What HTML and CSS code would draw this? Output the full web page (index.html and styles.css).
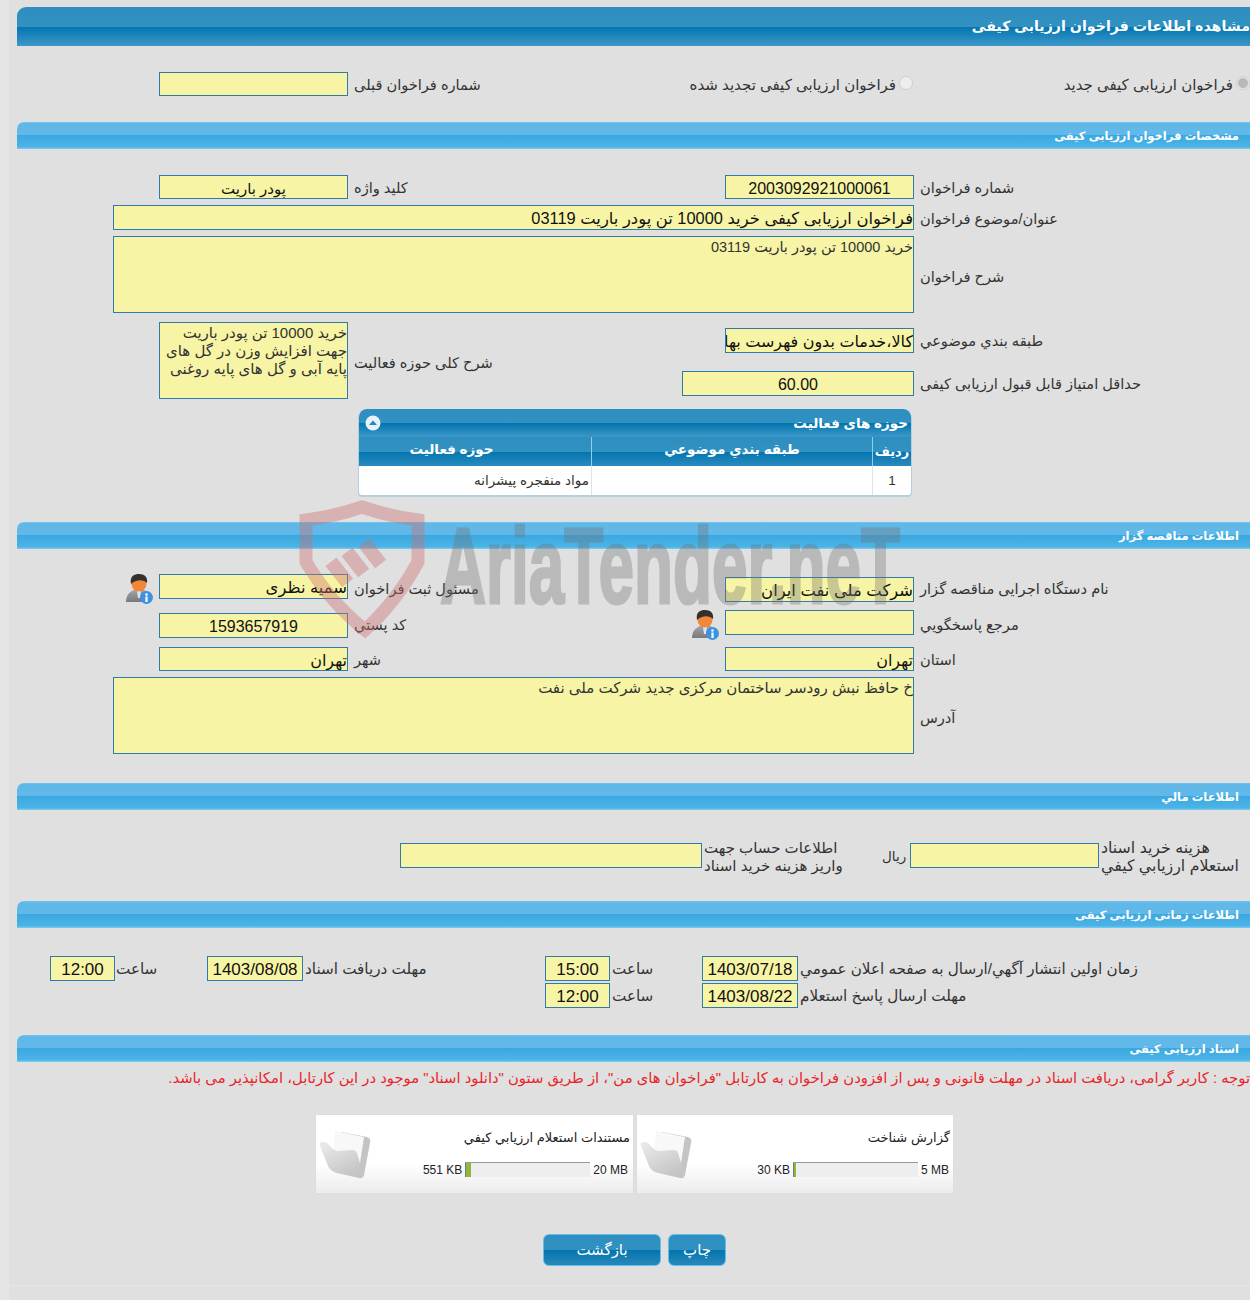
FILE: index.html
```html
<!DOCTYPE html>
<html lang="fa">
<head>
    <meta charset="UTF-8">
    <title>مشاهده اطلاعات فراخوان ارزیابی کیفی</title>
    <link rel="stylesheet" href="styles.css">
</head>
<body>
<div class="page">

    <div class="main-bar">مشاهده اطلاعات فراخوان ارزیابی کیفی</div>

    <!-- type of call -->
    <div class="row row-top">
        <div class="cell"><div class="field w189"></div></div>
        <div class="label">شماره فراخوان قبلی</div>
        <div class="cell radio-cell"><span class="radio-text">فراخوان ارزیابی کیفی تجدید شده</span><span class="radio"></span></div>
        <div class="cell radio-cell first"><span class="radio-text">فراخوان ارزیابی کیفی جدید</span><span class="radio on"></span></div>
    </div>

    <div class="bar mt26">مشخصات فراخوان ارزیابی کیفی</div>

    <div class="row mt26">
        <div class="cell"><div class="field w189 center small">پودر باریت</div></div>
        <div class="label">کلید واژه</div>
        <div class="cell"><div class="field w189 center">2003092921000061</div></div>
        <div class="label">شماره فراخوان</div>
    </div>
    <div class="row rh25 mt6">
        <div class="cell wide"><div class="field h25 wide-field name">فراخوان ارزیابی کیفی خرید 10000 تن پودر باریت 03119</div></div>
        <div class="label">عنوان/موضوع فراخوان</div>
    </div>
    <div class="row rh77 mt6">
        <div class="cell wide"><div class="area wide-field">خرید 10000 تن پودر باریت 03119</div></div>
        <div class="label">شرح فراخوان</div>
    </div>

    <div class="row split mt9">
        <div class="cell span-rows"><div class="area w189 big">خرید 10000 تن پودر باریت<br>جهت افزایش وزن در گل های<br>پایه آبی و گل های پایه روغنی</div></div>
        <div class="label span-rows">شرح کلی حوزه فعالیت</div>
        <div class="cell at-cat"><div class="field h25 w189">کالا،خدمات بدون فهرست بها</div></div>
        <div class="label at-cat">طبقه بندي موضوعي</div>
        <div class="cell at-score"><div class="field h25 w232 center">60.00</div></div>
        <div class="label at-score">حداقل امتیاز قابل قبول ارزیابی کیفی</div>
    </div>

    <!-- activity table -->
    <div class="activity">
        <div class="activity-title">
            <svg class="collapse" viewBox="0 0 16 16"><circle cx="8" cy="8" r="7.5" fill="#e6f1f8"/><path d="M4 10 L8 5.5 L12 10 Z" fill="#2a86b8"/></svg>
            <span>حوزه های فعالیت</span>
        </div>
        <div class="activity-head">
            <div class="head-name">حوزه فعالیت</div>
            <div>طبقه بندي موضوعي</div>
            <div class="head-num">رديف</div>
        </div>
        <div class="activity-row">
            <div class="activity-name">مواد منفجره پیشرانه</div>
            <div></div>
            <div class="activity-num">1</div>
        </div>
    </div>

    <div class="bar mt27">اطلاعات مناقصه گزار</div>

    <div class="row rh28 mt25">
        <div class="cell">
            <svg class="user" viewBox="0 0 28 30"><use href="#user-icon"/></svg>
            <div class="field h25 w189 name">سمیه نظری</div>
        </div>
        <div class="label">مسئول ثبت فراخوان</div>
        <div class="cell low"><div class="field h25 w189 name">شرکت ملی نفت ایران</div></div>
        <div class="label">نام دستگاه اجرایی مناقصه گزار</div>
    </div>
    <div class="row rh28 mt8">
        <div class="cell low"><div class="field h25 w189 center">1593657919</div></div>
        <div class="label">کد پستي</div>
        <div class="cell">
            <svg class="user" viewBox="0 0 28 30"><use href="#user-icon"/></svg>
            <div class="field h25 w189"></div>
        </div>
        <div class="label">مرجع پاسخگويي</div>
    </div>
    <div class="row mt9">
        <div class="cell"><div class="field w189">تهران</div></div>
        <div class="label">شهر</div>
        <div class="cell"><div class="field w189">تهران</div></div>
        <div class="label">استان</div>
    </div>
    <div class="row rh77 mt6">
        <div class="cell wide"><div class="area wide-field big">خ حافظ نبش رودسر ساختمان مرکزی جدید شرکت ملی نفت</div></div>
        <div class="label">آدرس</div>
    </div>

    <div class="bar mt29">اطلاعات مالي</div>

    <div class="money">
        <div class="field h25 w302"></div>
        <div class="money-label account">اطلاعات حساب جهت<br>واریز هزینه خرید اسناد</div>
        <div class="rial">ریال</div>
        <div class="field h25 w189"></div>
        <div class="money-label cost">هزینه خرید اسناد<br>استعلام ارزيابي کيفي</div>
    </div>

    <div class="bar mt33">اطلاعات زمانی ارزیابی کیفی</div>

    <div class="times mt28">
        <div class="field h25 w64 center">12:00</div>
        <div class="label">ساعت</div>
        <div class="field h25 w96 center">1403/08/08</div>
        <div class="label">مهلت دریافت اسناد</div>
        <div class="field h25 w64 center">15:00</div>
        <div class="label">ساعت</div>
        <div class="field h25 w96 center">1403/07/18</div>
        <div class="label">زمان اولین انتشار آگهي/ارسال به صفحه اعلان عمومي</div>
    </div>
    <div class="times second mt2">
        <div class="field h25 w64 center">12:00</div>
        <div class="label">ساعت</div>
        <div class="field h25 w96 center">1403/08/22</div>
        <div class="label">مهلت ارسال پاسخ استعلام</div>
    </div>

    <div class="bar mt27">اسناد ارزیابی کیفی</div>

    <div class="notice">توجه : کاربر گرامی، دریافت اسناد در مهلت قانونی و پس از افزودن فراخوان به کارتابل "فراخوان های من"، از طریق ستون "دانلود اسناد" موجود در این کارتابل، امکانپذیر می باشد.</div>

    <div class="files">
        <div class="file">
            <svg class="folder" viewBox="0 0 54 50"><use href="#folder-icon"/></svg>
            <div class="file-info">
                <div class="file-title">مستندات استعلام ارزيابي کيفي</div>
                <div class="file-usage">
                    <span>551 KB</span>
                    <div class="meter"><div class="meter-fill" style="width:5px"></div></div>
                    <span>20 MB</span>
                </div>
            </div>
        </div>
        <div class="file">
            <svg class="folder" viewBox="0 0 54 50"><use href="#folder-icon"/></svg>
            <div class="file-info">
                <div class="file-title">گزارش شناخت</div>
                <div class="file-usage">
                    <span>30 KB</span>
                    <div class="meter"><div class="meter-fill" style="width:2px"></div></div>
                    <span>5 MB</span>
                </div>
            </div>
        </div>
    </div>

    <div class="buttons">
        <button class="btn btn-back">بازگشت</button>
        <button class="btn btn-print">چاپ</button>
    </div>

    <!-- watermark lies over the page -->
    <svg class="watermark" viewBox="0 0 620 150" width="620" height="150">
        <path class="wm-shield" d="M10 20 Q40 16 66 7 Q92 16 122 20 L122 62 Q100 102 69 130 Q34 102 10 62 Z"/>
        <g class="wm-hammer">
            <rect x="69" y="40" width="14" height="27" transform="rotate(-38 76 53)"/>
            <rect x="52" y="49" width="14" height="27" transform="rotate(-38 59 62)"/>
            <rect x="36" y="59" width="14" height="27" transform="rotate(-38 43 72)"/>
        </g>
        <text class="wm-text" x="144" y="103" textLength="460" lengthAdjust="spacingAndGlyphs">AriaTender.neT</text>
    </svg>

    <!-- shared icons -->
    <svg class="defs" width="0" height="0">
        <defs>
            <linearGradient id="folder-front" x1="0" y1="0" x2="0.6" y2="1">
                <stop offset="0" stop-color="#ececec"/>
                <stop offset="1" stop-color="#c4c4c4"/>
            </linearGradient>
            <linearGradient id="user-body" x1="0" y1="0" x2="0" y2="1">
                <stop offset="0" stop-color="#a2a5a8"/>
                <stop offset="1" stop-color="#77797c"/>
            </linearGradient>
            <g id="user-icon">
                <path d="M1 28 C1 22 4 18 9 16 L19 16 C24 18 26 22 26 28 Z" fill="url(#user-body)"/>
                <path d="M12 17 L16 17 L15 24 L13 24 Z" fill="#dfe4e8"/>
                <ellipse cx="14" cy="9.5" rx="7.5" ry="8" fill="#f2873a"/>
                <path d="M6 10 C4.5 2 9.5 0 14 0 C19.5 0 23 3 22 9 C18 5 11 5.5 6 10 Z" fill="#33302e"/>
                <circle cx="21.5" cy="23.5" r="6.5" fill="#3d92e0"/>
                <circle cx="21.5" cy="20.5" r="1.3" fill="#fff"/>
                <rect x="20.4" y="22.5" width="2.2" height="5.5" fill="#fff"/>
            </g>
            <g id="folder-icon">
                <path d="M22 3 L48 8 C51 9 52 11 51 14 L45 46 C44 49 42 49 40 48 L30 36 Z" fill="#c4c4c4"/>
                <path d="M16 2 L45 8 L41 34 L14 26 Z" fill="#f8f8f8"/>
                <path d="M3 13 C1 13 0 15 1 17 L9 37 C11 41 14 43 18 44 L40 49 C44 50 45 47 44 44 L38 24 C37 22 36 21 33 21 L19 22 C16 22 14 20 12 18 L8 14 C7 13 5 13 3 13 Z" fill="url(#folder-front)"/>
            </g>
        </defs>
    </svg>

</div>
</body>
</html>
```

FILE: styles.css
```css
html, body {
    margin: 0;
    padding: 0;
    background: #fff;
}
body {
    width: 1250px;
    height: 1308px;
    overflow: hidden;
    font-family: "Liberation Sans", "DejaVu Sans", sans-serif;
    font-size: 14.6px;
    color: #333;
}
.page {
    position: relative;
    height: 1293px;
    padding-top: 7px;
    background: #e0e0e0;
    box-shadow: inset 9px 0 0 #e5e5e5;
    overflow: hidden;
}
.page::after {
    content: "";
    position: absolute;
    left: 9px;
    right: 0;
    top: 1285px;
    height: 1px;
    background: #e6e6e6;
}
.mt2 { margin-top: 2px; }
.mt6 { margin-top: 6px; }
.mt8 { margin-top: 8px; }
.mt9 { margin-top: 9px; }
.mt25 { margin-top: 25px; }
.mt26 { margin-top: 26px; }
.mt27 { margin-top: 27px; }
.mt28 { margin-top: 28px; }
.mt29 { margin-top: 29px; }
.mt33 { margin-top: 33px; }

/* title bars */
.main-bar {
    margin-left: 17px;
    height: 39px;
    line-height: 38px;
    border-top-left-radius: 9px;
    background: linear-gradient(#2e8ebf 0, #3191c1 50%, #0275b0 51%, #3d98c8 100%);
    color: #fff;
    font-size: 14.2px;
    font-weight: bold;
    direction: rtl;
    white-space: nowrap;
}
.bar {
    margin-left: 17px;
    height: 27px;
    line-height: 28px;
    padding-right: 11px;
    border-top-left-radius: 7px;
    background: linear-gradient(#74c6ef 0, #60b8e8 6%, #62b9e9 48%, #3aa9e1 50%, #4db3e6 92%, #7acff3 100%);
    color: #fff;
    font-size: 11.5px;
    font-weight: bold;
    direction: rtl;
}

/* form rows: four columns, field then its label */
.row {
    display: grid;
    grid-template-columns: 354px 371px 195px 330px;
    grid-template-rows: 24px;
    align-items: start;
}
.rh25 { grid-template-rows: 25px; }
.rh28 { grid-template-rows: 28px; }
.rh77 { grid-template-rows: 77px; }
.row-top {
    grid-template-columns: 354px 334px 226px 336px;
    margin-top: 26px;
}
.cell {
    display: flex;
    justify-content: flex-end;
    gap: 6px;
    padding-right: 6px;
}
.cell.wide {
    grid-column: 1 / 4;
}
.label {
    direction: rtl;
    text-align: left;
    white-space: nowrap;
    line-height: 18px;
    align-self: center;
    padding-top: 2px;
}
.row-top .radio-text {
    font-size: 15px;
    line-height: 26px;
    white-space: nowrap;
    direction: rtl;
}
.rh77 > .label, .split > .span-rows.label {
    padding-top: 5px;
}
.radio-cell {
    align-items: flex-start;
    gap: 3px;
    padding-right: 1px;
}
.radio-cell.first {
    padding-right: 0;
}
.radio {
    flex: none;
    box-sizing: border-box;
    width: 14px;
    height: 14px;
    margin-top: 4px;
    border: 1px solid #cfcfcf;
    border-radius: 50%;
    background: #ededed;
}
.radio.on {
    background: radial-gradient(circle, #b9b9b9 0 4.5px, #e8e8e8 5.5px);
}

.field, .area {
    box-sizing: border-box;
    background: #f7f5a5;
    border: 1px solid #2f7cab;
    direction: rtl;
    color: #111;
    font-size: 16px;
    white-space: nowrap;
    overflow: hidden;
    flex: none;
}
.field {
    height: 24px;
    line-height: 25px;
}
.area {
    height: 77px;
    padding-top: 1px;
    font-size: 14.5px;
    line-height: 18px;
    color: #333;
}
.area.big { font-size: 15px; }
.field.small { font-size: 15px; }
.field.name { font-size: 16.4px; }
.h25 { height: 25px; }
.w64 { width: 65px; }
.w96 { width: 96px; }
.w189 { width: 189px; }
.w232 { width: 232px; }
.w302 { width: 302px; }
.wide-field { width: 801px; }
.center { text-align: center; }
.low { padding-top: 3px; }

.split {
    grid-template-rows: 49px 28px;
}
.split .span-rows { grid-row: 1 / 3; }
.split .span-rows.cell { grid-column: 1; }
.split .span-rows.label { grid-column: 2; }
.at-cat { grid-row: 1; grid-column: 3; padding-top: 6px; }
.label.at-cat { grid-column: 4; align-self: start; padding-top: 10px; }
.at-score { grid-row: 2; grid-column: 2 / 4; }
.label.at-score { grid-column: 4; align-self: start; padding-top: 4px; }

.user {
    width: 28px;
    height: 30px;
    flex: none;
}

/* activity table */
.activity {
    width: 552px;
    margin: 10px 0 0 359px;
    height: 86px;
    border-radius: 8px 8px 3px 3px;
    box-shadow: 0 1px 0 1px #b7cfdd;
    overflow: hidden;
    background: #fff;
}
.activity-title {
    display: flex;
    justify-content: space-between;
    align-items: center;
    height: 28px;
    padding: 0 3px 0 6px;
    background: linear-gradient(#2e8ebf 0, #3191c1 50%, #0275b0 51%, #3d98c8 100%);
    color: #fff;
    font-size: 13.5px;
    font-weight: bold;
}
.activity-title span { direction: rtl; }
.collapse {
    width: 16px;
    height: 16px;
}
.activity-head, .activity-row {
    display: grid;
    grid-template-columns: 233px 281px 38px;
}
.activity-head {
    height: 29px;
    background: linear-gradient(#2e8ebf 0, #3191c1 50%, #0275b0 51%, #2a8abd 100%);
    color: #fff;
    font-size: 13.5px;
    font-weight: bold;
    line-height: 26px;
    text-align: center;
}
.activity-head > div, .activity-row > div {
    border-right: 1px solid #8fd0ee;
    direction: rtl;
}
.activity-head > div:last-child, .activity-row > div:last-child {
    border-right: 0;
}
.activity-head .head-name { padding-right: 47px; }
.activity-head .head-num { padding-top: 2px; font-size: 13px; }
.activity-row > div {
    border-right-color: #dde3e7;
}
.activity-row {
    height: 29px;
    line-height: 30px;
    font-size: 13.5px;
}
.activity-name { padding-right: 2px; }
.activity-num { text-align: center; }

/* money row */
.money {
    display: flex;
    height: 25px;
    align-items: flex-start;
    margin: 33px 0 0 400px;
}
.money-label {
    direction: rtl;
    text-align: left;
    font-size: 15px;
    line-height: 18px;
    white-space: nowrap;
    margin-left: 2px;
    margin-top: -4px;
}
.account { width: 178px; }
.cost { width: 149px; font-size: 15.8px; }
.rial {
    width: 28px;
    font-size: 13.5px;
    line-height: 28px;
    direction: rtl;
    text-align: left;
}

/* dates */
.times {
    display: grid;
    grid-template-columns: 50px 64px 93px 96px 242px 65px 92px 96px 1fr;
    grid-template-rows: 25px;
    align-items: start;
}
.times .field { font-size: 17px; }
.times .field:nth-child(1) { grid-column: 2; }
.times .label {
    padding-left: 2px;
    padding-top: 4px;
    align-self: start;
    font-size: 15.2px;
}
.times.second { grid-template-columns: 545px 65px 92px 96px 1fr; }

.notice {
    height: 20px;
    margin-top: 6px;
    line-height: 20px;
    direction: rtl;
    white-space: nowrap;
    color: #e8262a;
    font-size: 14.8px;
}

/* document cards */
.files {
    display: flex;
    gap: 4px;
    margin: 27px 0 0 316px;
}
.file {
    display: flex;
    width: 317px;
    height: 78px;
    background: linear-gradient(#fff 0, #fff 62%, #ececec 100%);
    box-shadow: 0 0 1px #ccc;
    color: #222;
}
.file + .file { width: 316px; }
.file + .file .file-usage { padding-right: 1px; }
.folder {
    flex: none;
    width: 54px;
    height: 50px;
    margin: 14px 0 0 3px;
}
.file-info {
    flex: 1;
    padding: 14px 3px 0 0;
}
.file-title {
    direction: rtl;
    font-size: 13px;
    line-height: 17px;
    white-space: nowrap;
}
.file-usage {
    display: flex;
    justify-content: flex-end;
    align-items: center;
    gap: 3px;
    margin-top: 16px;
    padding-right: 2px;
    font-size: 12px;
}
.meter {
    width: 125px;
    height: 15px;
    box-sizing: border-box;
    border-top: 1px solid #999;
    border-left: 1px solid #777;
    background: #eee;
}
.meter-fill {
    height: 14px;
    background: #92b83a;
}

/* buttons */
.buttons {
    display: flex;
    gap: 7px;
    margin: 41px 0 0 543px;
}
.btn {
    height: 32px;
    border: 1px solid #5fc0ea;
    border-radius: 6px;
    background: linear-gradient(#2e8ebf 0, #3191c1 50%, #0275b0 51%, #2a88bb 100%);
    color: #fff;
    font-family: "Liberation Sans", "DejaVu Sans", sans-serif;
    font-size: 15px;
    direction: rtl;
    padding: 0;
}
.btn-back { width: 118px; }
.btn-print { width: 58px; }

/* watermark */
.watermark {
    position: absolute;
    left: 296px;
    top: 500px;
    pointer-events: none;
}
.wm-shield {
    fill: none;
    stroke: rgba(205, 110, 110, 0.4);
    stroke-width: 13;
}
.wm-hammer rect {
    fill: rgba(205, 110, 110, 0.4);
}
.wm-text {
    font-weight: bold;
    font-size: 108px;
    fill: #707070;
    stroke: #707070;
    stroke-width: 3px;
    opacity: 0.34;
}
.defs {
    position: absolute;
}
```
